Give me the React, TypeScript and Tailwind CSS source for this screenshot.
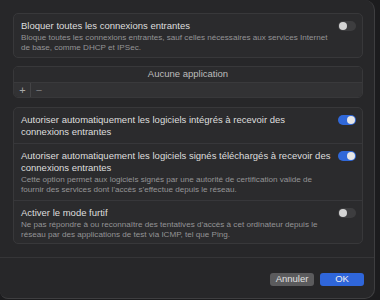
import React from "react";

function Toggle({ on }: { on: boolean }) {
  return on ? (
    <div className="w-[18px] h-[10px] rounded-full bg-[#3068d9] flex items-center justify-end px-[1px] shrink-0">
      <div className="w-[8px] h-[8px] rounded-full bg-[#e6e6e6]" />
    </div>
  ) : (
    <div className="w-[18px] h-[10px] rounded-full bg-[#3d3d3f] flex items-center justify-start px-[1px] shrink-0">
      <div className="w-[8px] h-[8px] rounded-full bg-[#d4d4d4]" />
    </div>
  );
}

function Row({
  title,
  desc,
  on,
  border,
}: {
  title: React.ReactNode;
  desc?: React.ReactNode;
  on: boolean;
  border?: boolean;
}) {
  return (
    <div className={"flex items-start justify-between pl-[7px] pr-[6px] pt-[6px] pb-[5px] " + (border ? "border-b border-[#37373a]" : "")}>
      <div className="flex flex-col whitespace-nowrap">
        <div className="text-[9.5px] leading-[12px] text-[#dedede]">{title}</div>
        {desc && <div className="text-[8.1px] leading-[10px] text-[#949496] mt-[1px]">{desc}</div>}
      </div>
      <div className="mt-[1px]">
        <Toggle on={on} />
      </div>
    </div>
  );
}

export default function App() {
  return (
    <div className="w-[380px] h-[300px] bg-[#1c1c1e] overflow-hidden" style={{ fontFamily: '"Liberation Sans", Arial, sans-serif' }}>
      <div className="w-[375px] h-[299px] bg-[#272729] rounded-tr-[10px] rounded-br-[10px] rounded-bl-[8px] border-r border-b border-[#3e3e40] flex flex-col">
        <div className="flex-1 flex flex-col pt-[13px] pl-[13px] pr-[11px]">
          <div className="bg-[#2b2b2d] border border-[#38383a] rounded-[5px] h-[45px]">
            <Row
              title="Bloquer toutes les connexions entrantes"
              desc={
                <>
                  Bloque toutes les connexions entrantes, sauf celles nécessaires aux services Internet
                  <br />
                  de base, comme DHCP et IPSec.
                </>
              }
              on={false}
            />
          </div>
          <div className="mt-[8px] border border-[#38383a] rounded-[5px] h-[32px] flex flex-col overflow-hidden">
            <div className="h-[16px] bg-[#2b2b2d] flex items-center justify-center text-[9.5px] text-[#bdbdbd]">
              Aucune application
            </div>
            <div className="h-[15px] bg-[#323234] border-t border-[#3a3a3c] flex items-center text-[#a8a8a8]">
              <div className="w-[17px] h-full flex items-center justify-center text-[11px] border-r border-[#444446] pl-[1px]">+</div>
              <div className="w-[16px] h-full flex items-center justify-center text-[11px] text-[#7e7e80]">−</div>
            </div>
          </div>
          <div className="mt-[9px] bg-[#2b2b2d] border border-[#38383a] rounded-[5px] h-[137px] flex flex-col">
            <Row
              title={
                <>
                  Autoriser automatiquement les logiciels intégrés à recevoir des
                  <br />
                  connexions entrantes
                </>
              }
              on={true}
              border
            />
            <Row
              title={
                <>
                  Autoriser automatiquement les logiciels signés téléchargés à recevoir des
                  <br />
                  connexions entrantes
                </>
              }
              desc={
                <>
                  Cette option permet aux logiciels signés par une autorité de certification valide de
                  <br />
                  fournir des services dont l’accès s’effectue depuis le réseau.
                </>
              }
              on={true}
              border
            />
            <Row
              title="Activer le mode furtif"
              desc={
                <>
                  Ne pas répondre à ou reconnaître des tentatives d’accès à cet ordinateur depuis le
                  <br />
                  réseau par des applications de test via ICMP, tel que Ping.
                </>
              }
              on={false}
            />
          </div>
        </div>
        <div className="h-[41px] border-t border-[#353537] flex items-start justify-end gap-[6px] pt-[15px] pr-[10px]">
          <div className="w-[44px] h-[13px] rounded-[3px] bg-[#5b5b5d] text-[#e0e0e0] text-[9.5px] flex items-center justify-center">
            Annuler
          </div>
          <div className="w-[44px] h-[13px] rounded-[3px] bg-[#2f66da] text-[#f0f0f0] text-[9.5px] flex items-center justify-center">
            OK
          </div>
        </div>
      </div>
    </div>
  );
}
